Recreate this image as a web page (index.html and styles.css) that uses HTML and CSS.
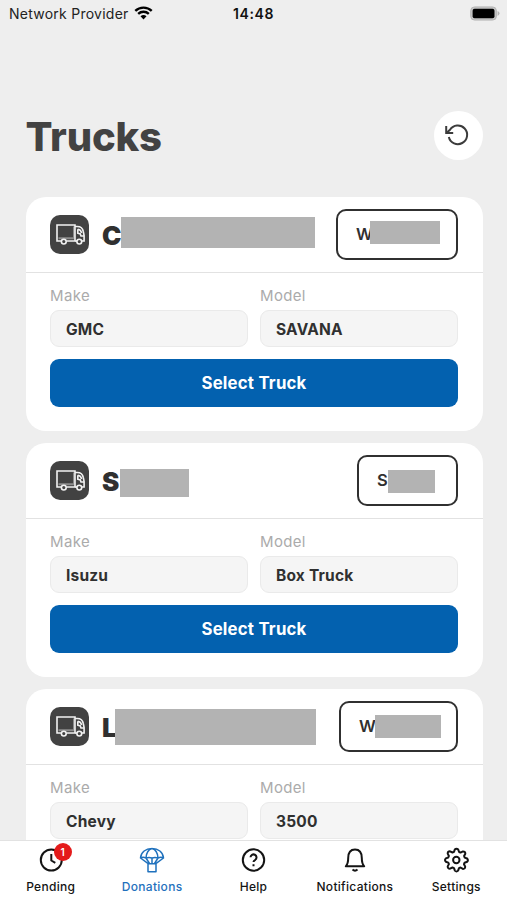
FILE: index.html
```html
<!DOCTYPE html>
<html lang="en">
<head>
<meta charset="utf-8">
<meta name="viewport" content="width=device-width, initial-scale=1">
<title>Trucks</title>
<link rel="stylesheet" href="styles.css">
</head>
<body>
<svg class="defs" aria-hidden="true">
  <symbol id="truck" viewBox="0 0 30 22">
    <path class="shade" d="M3.500 14.200h16M19 2.500v11.700" />
    <path d="M6 17H2V1h18v16h-8.500" />
    <path d="M20 2.500h2.300c3.400 0 5.400 1.500 6 5l.8 4V17H27M20 17h2" />
    <path d="M22.800 5.200v4l2.500.8.700 2h3M22.800 5.200c2.200.2 3.400 1.500 3.800 3.800" />
    <circle cx="8.800" cy="17.600" r="2.400"/><circle cx="24.300" cy="17.600" r="2.400"/>
  </symbol>
</svg>
<div class="screen">
  <header class="status">
    <div class="carrier"><span>Network Provider</span>
      <svg class="wifi" viewBox="0 0 20 15"><path d="M1.200 5.300a12.500 12.500 0 0 1 17.600 0M4.300 8.500a8.200 8.200 0 0 1 11.400 0" fill="none" stroke="#000" stroke-width="2.500"/><path d="M6.800 11.100a4.600 4.600 0 0 1 6.400 0L10 14.400z"/></svg>
    </div>
    <div class="clock">14:48</div>
    <svg class="battery" viewBox="0 0 31 15"><rect x=".7" y=".7" width="26.600" height="13.600" rx="4" fill="#c4c4c4" stroke="#b4b4b4"/><rect x="2.700" y="2.700" width="22.600" height="9.600" rx="2"/><path d="M28.500 5v5q2-1 2-2.500t-2-2.500" fill="#b4b4b4"/></svg>
  </header>

  <div class="heading">
    <h1>Trucks</h1>
    <button class="refresh" aria-label="Refresh"><svg viewBox="0 0 24 24"><path d="M1.200 3v7h7"/><path d="M3.800 14A9.300 9.300 0 1 0 5 6.800L1.600 9.800"/></svg></button>
  </div>

  <main class="list">
    <section class="card first">
      <div class="card-head">
        <span class="badge"><svg><use href="#truck"/></svg></span>
        <h2>C<i class="mask"></i></h2>
        <span class="tag">W<i class="mask"></i></span>
      </div>
      <div class="card-body">
        <div class="fields">
          <div class="field"><label>Make</label><div class="value">GMC</div></div>
          <div class="field"><label>Model</label><div class="value">SAVANA</div></div>
        </div>
        <button class="select">Select Truck</button>
      </div>
    </section>

    <section class="card second">
      <div class="card-head">
        <span class="badge"><svg><use href="#truck"/></svg></span>
        <h2>S<i class="mask"></i></h2>
        <span class="tag">S<i class="mask"></i></span>
      </div>
      <div class="card-body">
        <div class="fields">
          <div class="field"><label>Make</label><div class="value">Isuzu</div></div>
          <div class="field"><label>Model</label><div class="value">Box Truck</div></div>
        </div>
        <button class="select">Select Truck</button>
      </div>
    </section>

    <section class="card third">
      <div class="card-head">
        <span class="badge"><svg><use href="#truck"/></svg></span>
        <h2>L<i class="mask"></i></h2>
        <span class="tag">W<i class="mask"></i></span>
      </div>
      <div class="card-body">
        <div class="fields">
          <div class="field"><label>Make</label><div class="value">Chevy</div></div>
          <div class="field"><label>Model</label><div class="value">3500</div></div>
        </div>
      </div>
    </section>
  </main>

  <nav class="tabs">
    <a class="tab"><span class="glyph"><svg viewBox="0 0 26 26"><circle cx="13.300" cy="13" r="10.500"/><path d="M13.300 7v6.500l4 2.300"/></svg><b class="count">1</b></span>Pending</a>
    <a class="tab active"><span class="glyph"><svg class="thin" viewBox="0 0 26 26"><path d="M1.500 11C2 5 6.800 1.500 13 1.500S24 5 24.500 11q-2.500-1.300-5.500 0-3-1-6 0-3-1-6 0-3-1.300-5.500 0zM7 11C7.300 6 9.500 2.500 13 1.500c3.500 1 5.700 4.500 6 9.500M13 11v5.500M1.500 11l8 5.800M24.500 11l-8 5.800M7 11l3.500 5.500M19 11l-3.500 5.500M9 16.700h8v8H9z"/></svg></span>Donations</a>
    <a class="tab"><span class="glyph"><svg viewBox="0 0 26 26"><circle cx="13.500" cy="13" r="10.700"/><path d="M10.500 10.300a3 3 0 1 1 4.800 2.500c-1.300.8-1.800 1.200-1.800 2.200M13.500 17.300v2"/></svg></span>Help</a>
    <a class="tab"><span class="glyph"><svg viewBox="0 0 26 26"><path d="M3.800 19.300h18.400c-1.800-2-2.400-4-2.400-8.300 0-5.500-2.500-8.600-6.800-8.600S6.200 5.500 6.200 11c0 4.300-.6 6.300-2.400 8.300z"/><path d="M10.500 22.500q2.500 2.300 5 0"/></svg></span>Notifications</a>
    <a class="tab"><span class="glyph"><svg viewBox="0 0 26 26"><circle cx="13.300" cy="13" r="3.200"/><path transform="translate(.5 0)" d="M11.300 2.500Q13 .8 14.700 2.500L15.600 5l1.400.6 2.500-1.200q2.400 0 2.300 2.300L20.600 9l.6 1.600 2.400.9q1.500 1.700 0 3.300l-2.500.9-.6 1.500 1.200 2.400q0 2.400-2.300 2.300L17 20.500l-1.500.6-.9 2.500q-1.600 1.600-3.200 0l-.9-2.500L9 20.500l-2.500 1.200q-2.400 0-2.300-2.300l1.200-2.300-.6-1.500-2.500-.9Q.8 13 2.300 11.400l2.500-.9L5.400 9 4.200 6.600q0-2.400 2.300-2.300L9 5.500l1.500-.6z"/></svg></span>Settings</a>
  </nav>
</div>
</body>
</html>
```

FILE: styles.css
```css
* { box-sizing: border-box; }
body { margin: 0; background: #eee; color: #303030; font-family: Inter, "Liberation Sans", sans-serif; }
h1, h2 { margin: 0; }
button { border: 0; padding: 0; font: inherit; }
.defs { display: none; }
.screen { display: flex; flex-direction: column; height: 900px; overflow: hidden; }

.status { flex: none; display: grid; grid-template-columns: 1fr auto 1fr; align-items: center; height: 27px; padding: 0 7px 0 9px; color: #222; font-size: 14px; }
.carrier { display: flex; align-items: center; gap: 5px; letter-spacing: .25px; white-space: nowrap; }
.wifi { width: 19px; height: 14px; margin-top: -2px; }
.clock { margin: 0 1px 0 -1px; color: #111; font-weight: 600; letter-spacing: .6px; }
.battery { width: 30px; height: 15px; justify-self: end; margin-top: -1px; }

.heading { flex: none; display: flex; align-items: center; justify-content: space-between; height: 50px; margin-top: 83px; padding: 0 24.500px 0 25.500px; }
h1 { padding-top: 4px; color: #424242; font-size: 40px; line-height: 50px; font-weight: 800; letter-spacing: -.2px; }
.refresh { display: grid; place-items: center; width: 49px; height: 49px; border-radius: 50%; background: #fff; }
.refresh svg { width: 24px; height: 24px; margin-right: 3px; fill: none; stroke: #3c3c3c; stroke-width: 2; }

.list { flex: 1; min-height: 0; overflow: hidden; display: flex; flex-direction: column; gap: 12px; padding: 37px 24.500px 0 25.500px; }
.card { flex: none; height: 234px; border-radius: 20px; background: #fff; }
.card-head { display: flex; align-items: center; height: 76px; padding: 0 24.500px; border-bottom: 1.500px solid #e2e2e2; }
.badge { display: grid; place-items: center; width: 39px; height: 39px; border-radius: 10px; background: #424242; }
.badge svg { width: 30px; height: 22px; fill: none; stroke: #f2f2f2; stroke-width: 1.600px; }
.shade { stroke: #8c8c8c; stroke-width: 2px; }
h2 { position: relative; margin-left: 13px; padding-top: 2px; font-size: 26px; line-height: 40px; font-weight: 900; }
.tag { position: relative; margin-left: auto; height: 51px; padding-left: 18px; border: 2px solid #303030; border-radius: 10px; font-size: 16.500px; line-height: 47px; font-weight: 600; }
.mask { position: absolute; background: #b3b3b3; }
.tag .mask { top: 10px; height: 23px; }
.first .tag { width: 122px; }
.second .tag { width: 101px; }
.third .tag { width: 119px; }
.first .tag .mask { left: 32px; width: 70px; }
.second .tag .mask { left: 29px; width: 47px; top: 13px; }
.third .tag .mask { left: 34px; width: 66px; top: 12px; }
.first h2 .mask { left: 19px; top: 3px; width: 194px; height: 31px; }
.second h2 .mask { left: 18px; top: 9px; width: 69px; height: 28px; }
.third h2 .mask { left: 13px; top: 3px; width: 201px; height: 36px; }

.card-body { padding: 13px 24.500px 24px; }
.fields { display: grid; grid-template-columns: 1fr 1fr; gap: 12px; }
label { display: block; height: 24px; color: #ababab; font-size: 15px; line-height: 20px; letter-spacing: .35px; }
.value { height: 37px; padding-left: 15px; border: 1px solid #eaeaea; border-radius: 9px; background: #f5f5f5; font-size: 15.500px; line-height: 37px; font-weight: 650; letter-spacing: .2px; }
.select { display: block; width: 100%; height: 48px; margin-top: 12px; border-radius: 9px; background: #0361af; color: #fff; font-size: 16.800px; font-weight: 650; letter-spacing: .2px; }

.tabs { flex: none; display: grid; grid-template-columns: repeat(5, 1fr); height: 60px; border-top: 1px solid #e2e2e2; background: #fff; color: #141414; }
.tab { display: flex; flex-direction: column; align-items: center; padding-top: 6px; font-size: 12px; line-height: 15px; font-weight: 500; letter-spacing: .3px; }
.active { color: #1f71bd; }
.glyph { position: relative; height: 26px; margin-bottom: 6px; }
.glyph svg { display: block; width: 26px; height: 26px; fill: none; stroke: currentColor; stroke-width: 2; stroke-linejoin: round; }
.glyph .thin { stroke-width: 1.500; }
.count { position: absolute; left: 16px; top: -4px; width: 18px; height: 18px; border-radius: 50%; background: #e41b1b; color: #fff; font-size: 10px; line-height: 18px; font-weight: 600; text-align: center; letter-spacing: 0; }
```
